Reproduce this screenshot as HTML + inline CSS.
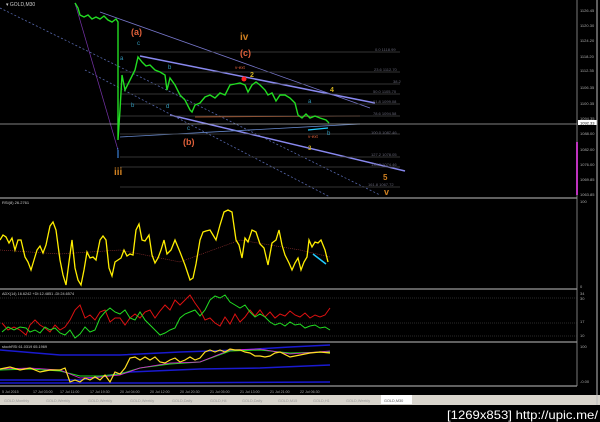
<!DOCTYPE html>
<html><head><style>
html,body{margin:0;padding:0;background:#000;width:600px;height:422px;overflow:hidden}
svg{display:block}
text{font-family:"Liberation Sans",sans-serif}
</style></head><body>
<svg width="600" height="422" viewBox="0 0 600 422" xmlns="http://www.w3.org/2000/svg">
<rect width="600" height="422" fill="#000"/>
<!-- main chart -->
<text x="6" y="6" font-size="5" fill="#ccc">▾ GOLD,M30</text>
<!-- dotted/diagonal lines -->
<line x1="0" y1="8" x2="380" y2="195" stroke="#5566aa" stroke-width="0.8" stroke-dasharray="2,2"/>
<line x1="85" y1="70" x2="330" y2="197" stroke="#5566aa" stroke-width="0.8" stroke-dasharray="2,2"/>
<line x1="100" y1="12" x2="370" y2="108" stroke="#7777cc" stroke-width="0.8"/>
<line x1="140" y1="56" x2="375" y2="103" stroke="#8888ee" stroke-width="1.5"/>
<line x1="170" y1="115" x2="405" y2="171" stroke="#8888ee" stroke-width="1.5"/>
<line x1="120" y1="137" x2="360" y2="124" stroke="#6688cc" stroke-width="0.8"/>
<line x1="195" y1="117" x2="360" y2="116" stroke="#cc6633" stroke-width="0.7"/>
<line x1="75" y1="3" x2="118" y2="150" stroke="#7733aa" stroke-width="0.7"/>
<!-- fib lines -->
<g stroke="#444" stroke-width="0.7">
<line x1="120" y1="52" x2="400" y2="52"/><line x1="120" y1="72" x2="400" y2="72"/>
<line x1="120" y1="84" x2="400" y2="84"/><line x1="120" y1="94" x2="400" y2="94"/>
<line x1="120" y1="104" x2="400" y2="104"/><line x1="120" y1="116" x2="400" y2="116"/>
<line x1="120" y1="134" x2="400" y2="134"/><line x1="120" y1="157" x2="400" y2="157"/>
<line x1="120" y1="167" x2="400" y2="167"/><line x1="120" y1="187" x2="400" y2="187"/>
</g>
<g font-size="4" fill="#667">
<text x="375" y="51">0.0 1118.99</text><text x="374" y="71">23.6 1112.70</text>
<text x="393" y="83">38.2</text><text x="373" y="93">50.0 1105.70</text>
<text x="373" y="103">61.8 1099.08</text><text x="373" y="115">78.6 1094.58</text>
<text x="371" y="134">100.0 1087.46</text><text x="371" y="156">127.2 1078.05</text>
<text x="371" y="166">138.2 1074.46</text><text x="368" y="186">161.8 1067.72</text>
</g>
<line x1="0" y1="124" x2="577" y2="124" stroke="#aaa" stroke-width="0.8"/>
<!-- price -->
<polyline fill="none" stroke="#22dd22" stroke-width="1.4" points="75,3 78,8 80,15 84,17 88,15 92,19 96,17 100,19 104,16 108,20 112,22 116,19 118,22 118,140 120,110 122,75 125,90 130,80 135,70 138,57 142,62 146,66 150,65 155,70 160,72 165,75 167,90 170,78 175,85 180,95 185,100 190,110 192,112 195,105 200,103 205,97 210,95 215,98 220,93 225,95 230,85 235,84 240,83 245,85 248,92 252,85 256,82 260,85 265,90 268,95 272,93 276,101 280,95 285,95 290,98 295,103 298,115 302,118 306,114 310,118 315,116 320,118 326,120 329,123"/>
<line x1="118" y1="150" x2="118" y2="158" stroke="#4499ff" stroke-width="1"/>
<text x="116" y="152" font-size="7" fill="#4499ff">↑</text>
<g font-weight="bold">
<text x="131" y="35" font-size="9" fill="#e0603a">(a)</text>
<text x="240" y="40" font-size="10" fill="#d08020">iv</text>
<text x="240" y="56" font-size="9" fill="#e0603a">(c)</text>
<text x="183" y="145" font-size="9" fill="#e0603a">(b)</text>
<text x="114" y="175" font-size="10" fill="#d08020">iii</text>
<text x="383" y="180" font-size="8" fill="#d08020">5</text>
<text x="384" y="195" font-size="9" fill="#d08020">v</text>
<text x="330" y="92" font-size="7" fill="#d0b020">4</text>
<text x="250" y="77" font-size="7" fill="#d0b020">2</text>
<text x="308" y="150" font-size="6" fill="#d0b020">3</text>
</g>
<circle cx="244" cy="79" r="2.5" fill="#ff2222"/>
<text x="235" y="69" font-size="4.5" fill="#e0603a">v-ext</text>
<text x="308" y="138" font-size="4.5" fill="#e0603a">v-ext</text>
<line x1="308" y1="130" x2="328" y2="128" stroke="#22ccff" stroke-width="1.2"/>
<g font-size="6" fill="#3399bb">
<text x="137" y="45">c</text><text x="120" y="60">a</text><text x="168" y="69">b</text>
<text x="131" y="107">b</text><text x="166" y="108">d</text><text x="187" y="130">c</text>
<text x="308" y="103">a</text><text x="327" y="135">b</text>
</g>
<!-- right axis -->
<line x1="577" y1="0" x2="577" y2="386" stroke="#999" stroke-width="0.8"/>
<line x1="577" y1="142" x2="577" y2="195" stroke="#ff44ff" stroke-width="1.5"/>
<g font-size="4" fill="#aaa">
<text x="580" y="12">1126.45</text><text x="580" y="27">1120.30</text><text x="580" y="42">1124.20</text>
<text x="580" y="58">1118.20</text><text x="580" y="72">1112.35</text><text x="580" y="89">1106.35</text>
<text x="580" y="105">1100.35</text><text x="580" y="120">1094.35</text><text x="580" y="135">1088.00</text>
<text x="580" y="151">1082.00</text><text x="580" y="166">1076.00</text><text x="580" y="181">1069.85</text>
<text x="580" y="196">1063.85</text>
</g>
<rect x="578" y="120" width="19" height="5" fill="#fff"/>
<text x="580" y="124.5" font-size="4" fill="#000">1092.33</text>
<!-- separators -->
<g stroke="#999" stroke-width="1.2">
<line x1="0" y1="198" x2="577" y2="198"/><line x1="0" y1="289" x2="577" y2="289"/>
<line x1="0" y1="342" x2="577" y2="342"/><line x1="0" y1="386" x2="577" y2="386"/>
</g>
<!-- RSI -->
<text x="2" y="204" font-size="4" fill="#ccc">RSI(8) 26.2761</text>
<text x="580" y="203" font-size="4" fill="#aaa">100</text>
<text x="580" y="288" font-size="4" fill="#aaa">0</text>
<polyline fill="none" stroke="#993333" stroke-width="0.6" stroke-dasharray="1,1" points="0,250 60,254 120,250 180,262 240,240 300,250 330,257"/>
<polyline fill="none" stroke="#ffee00" stroke-width="1.3" points="0,240 3,235 6,237 9,243 12,238 15,250 18,240 21,240 25,257 28,262 31,270 34,260 37,250 40,246 43,253 46,245 50,226 53,222 56,230 60,260 63,275 66,285 69,262 72,240 75,268 78,280 81,285 84,270 87,252 90,258 93,257 96,260 100,240 103,236 106,240 109,268 112,276 115,262 118,260 121,258 124,250 127,256 130,254 133,255 136,230 139,224 142,240 145,241 149,235 152,255 155,263 158,258 161,250 164,240 167,254 171,250 175,240 180,252 185,265 190,280 193,278 196,264 200,240 203,232 206,231 210,230 213,235 216,240 220,225 224,212 228,210 232,212 236,240 239,245 242,258 245,238 248,242 252,230 256,232 260,244 264,248 268,265 272,243 276,240 279,230 282,245 285,255 289,263 292,270 295,263 298,258 301,270 304,262 307,257 309,240 312,247 315,242 318,243 321,240 325,250 328,262"/>
<line x1="313" y1="254" x2="326" y2="264" stroke="#22ccff" stroke-width="1.5"/>
<!-- ADX -->
<text x="2" y="295" font-size="3.8" fill="#ccc">ADX(14) 16.6242 +DI:12.4851 -DI:24.6574</text>
<g font-size="4" fill="#aaa"><text x="580" y="295">34</text><text x="580" y="300">30</text><text x="580" y="323">17</text><text x="580" y="337">10</text></g>
<g stroke="#555" stroke-width="0.5" stroke-dasharray="1,1"><line x1="0" y1="298" x2="577" y2="298"/><line x1="0" y1="323" x2="577" y2="323"/><line x1="0" y1="336" x2="577" y2="336"/></g>
<polyline fill="none" stroke="#dd1111" stroke-width="1" points="2,323 8,330 14,327 20,330 26,335 30,325 35,320 40,325 45,328 50,332 55,325 60,330 65,327 70,320 75,310 80,305 85,318 90,315 95,320 100,312 105,310 110,322 115,318 120,318 125,325 130,318 135,314 140,318 145,312 150,310 155,318 160,311 165,305 170,310 175,300 180,305 185,300 190,295 195,303 200,310 205,320 210,318 215,323 220,326 225,317 230,324 235,314 240,322 245,317 250,310 255,316 260,310 265,317 270,312 275,318 280,314 285,316 290,311 295,315 300,317 305,313 310,318 315,315 320,317 325,315 330,308"/>
<polyline fill="none" stroke="#22dd22" stroke-width="1" points="2,332 8,327 14,330 20,327 26,328 30,332 35,330 40,333 45,327 50,330 55,328 60,333 65,335 70,330 75,338 80,334 85,327 90,332 95,330 100,318 105,312 110,308 115,312 120,314 125,310 130,318 135,320 140,312 145,320 150,325 155,330 160,335 165,333 170,330 175,328 180,318 185,314 190,312 195,310 200,316 205,310 210,300 215,296 220,298 225,295 230,302 235,305 240,308 245,305 250,312 255,317 260,314 265,317 270,322 275,325 280,323 285,326 290,322 295,325 300,324 305,328 310,326 315,325 320,328 325,327 330,330"/>
<!-- Stoch -->
<text x="2" y="348" font-size="3.8" fill="#ccc">stochRSI 61.0319 65.1969</text>
<text x="580" y="348" font-size="4" fill="#aaa">100</text>
<text x="580" y="383" font-size="4" fill="#aaa">-0.00</text>
<polyline fill="none" stroke="#1a1ad0" stroke-width="1.5" points="0,350 60,355 120,355 180,352 240,350 290,347 330,345"/>
<polyline fill="none" stroke="#1a1ad0" stroke-width="1.5" points="0,380 80,380 130,372 200,369 260,368 330,365"/>
<polyline fill="none" stroke="#1a1ad0" stroke-width="1.5" points="0,383 150,383 330,382"/>
<polyline fill="none" stroke="#22dd22" stroke-width="1" points="0,370 30,369 60,371 80,376 100,376 120,374 140,368 170,364 200,362 230,351 260,350 290,353 330,352"/>
<polyline fill="none" stroke="#dd22dd" stroke-width="0.8" points="0,369 30,368 60,370 80,378 100,377 120,375 140,368 170,363 200,362 230,350 260,349 290,354 330,351"/>
<polyline fill="none" stroke="#ffdd22" stroke-width="1.2" points="0,369 10,367 20,370 30,368 40,372 50,370 60,370 65,368 70,382 75,380 80,382 85,378 90,380 95,377 100,380 105,375 110,382 115,372 120,374 125,368 130,358 135,357 140,360 145,357 150,360 155,357 160,362 165,363 170,360 175,358 180,362 185,360 190,357 195,360 200,358 205,352 210,350 215,352 220,350 225,352 230,349 235,350 240,350 245,352 250,353 255,356 260,356 265,357 270,356 275,353 280,352 290,357 300,355 310,353 320,352 330,353"/>
<!-- time axis -->
<g font-size="3.6" fill="#aaa">
<text x="2" y="393">5 Jul 2015</text><text x="33" y="393">17 Jul 03:00</text><text x="60" y="393">17 Jul 11:00</text>
<text x="90" y="393">17 Jul 19:30</text><text x="120" y="393">20 Jul 04:00</text><text x="150" y="393">20 Jul 12:00</text>
<text x="180" y="393">20 Jul 20:30</text><text x="210" y="393">21 Jul 05:00</text><text x="240" y="393">21 Jul 13:00</text>
<text x="270" y="393">21 Jul 21:00</text><text x="300" y="393">22 Jul 06:30</text>
</g>
<!-- tabs -->
<rect x="0" y="395" width="600" height="10" fill="#d8d4cc"/>
<line x1="597" y1="0" x2="597" y2="405" stroke="#bbb" stroke-width="1"/>
<g font-size="3.8" fill="#999">
<text x="4" y="402">GOLD,Monthly</text><text x="46" y="402">GOLD,Weekly</text><text x="88" y="402">GOLD,Weekly</text>
<text x="130" y="402">GOLD,Weekly</text><text x="172" y="402">GOLD,Daily</text><text x="210" y="402">GOLD,H4</text>
<text x="242" y="402">GOLD,Daily</text><text x="278" y="402">GOLD,M15</text><text x="313" y="402">GOLD,H1</text>
<text x="346" y="402">GOLD,Weekly</text>
</g>
<rect x="381" y="395" width="31" height="9" fill="#fff"/>
<text x="384" y="402" font-size="3.8" fill="#555">GOLD,M30</text>
<text x="447" y="419" font-size="12" fill="#fff" font-family="Liberation Mono" textLength="151" lengthAdjust="spacingAndGlyphs">[1269x853] http://upic.me/</text>
</svg>
</body></html>
